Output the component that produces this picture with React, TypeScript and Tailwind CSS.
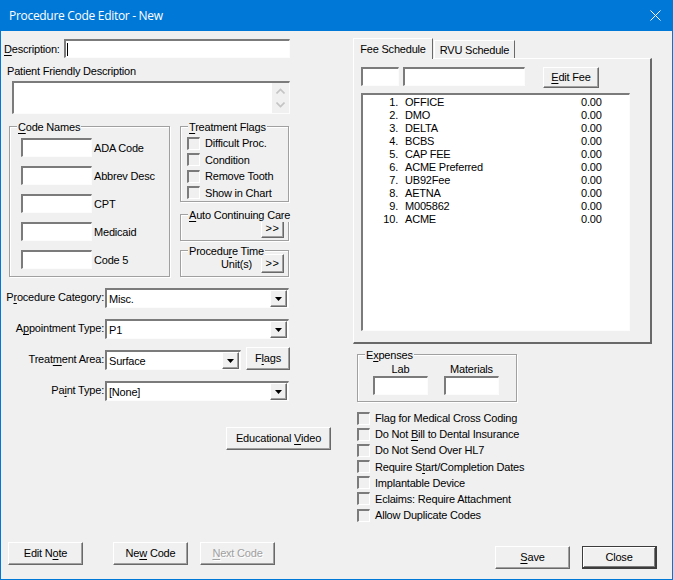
import React from "react";

const font = { fontFamily: "'Liberation Sans', Arial, sans-serif" };

function Sunken({ className = "bg-white", children }: { className?: string; children?: React.ReactNode }) {
  return (
    <div className={"box-border border-t-2 border-l-2 border-r border-b border-t-[#7b7b7b] border-l-[#7b7b7b] border-r-[#fcfcfc] border-b-[#fcfcfc] " + className}>
      {children}
    </div>
  );
}

function Btn({ className = "", children, disabled }: { className?: string; children: React.ReactNode; disabled?: boolean }) {
  return (
    <div className={"box-border flex items-center justify-center pb-[1px] border border-t-white border-l-white border-r-[#696969] border-b-[#696969] shadow-[inset_-1px_-1px_0_#a0a0a0] bg-[#f0f0f0] " + (disabled ? "text-[#a0a0a0] [text-shadow:1px_1px_0_#fff] " : "") + className}>
      <span>{children}</span>
    </div>
  );
}

function Check({ label }: { label: React.ReactNode }) {
  return (
    <div className="flex items-center h-4">
      <div className="box-border w-[13px] h-[13px] border-t-2 border-l-2 border-r border-b border-t-[#7b7b7b] border-l-[#7b7b7b] border-r-white border-b-white" />
      <span className="ml-[5px] whitespace-nowrap">{label}</span>
    </div>
  );
}

function Group({ className = "", title, titleClass = "left-[7px]", children }: { className?: string; title: React.ReactNode; titleClass?: string; children?: React.ReactNode }) {
  return (
    <div className={"relative box-border border border-[#a0a0a0] shadow-[1px_1px_0_#fff,inset_1px_1px_0_#fff] " + className}>
      <span className={"absolute -top-[7px] px-[1px] bg-[#f0f0f0] leading-[14px] whitespace-nowrap " + titleClass}>{title}</span>
      {children}
    </div>
  );
}

function Combo({ className = "", value }: { className?: string; value: string }) {
  return (
    <Sunken className={"bg-white flex items-center justify-between h-[20px] pl-[2px] pr-[1px] " + className}>
      <span>{value}</span>
      <div className="box-border flex items-center justify-center w-[17px] h-[17px] border border-t-white border-l-white border-r-[#696969] border-b-[#696969] shadow-[inset_-1px_-1px_0_#a0a0a0] bg-[#f0f0f0]">
        <svg width="7" height="4" viewBox="0 0 7 4"><path d="M0 0h7L3.5 4z" fill="#000" /></svg>
      </div>
    </Sunken>
  );
}

function CodeRow({ label }: { label: string }) {
  return (
    <div className="flex items-center h-[19px]">
      <Sunken className="bg-white w-[71px] h-[19px]" />
      <span className="ml-[2px] mt-[1px] whitespace-nowrap">{label}</span>
    </div>
  );
}

function U({ children }: { children: React.ReactNode }) {
  return <span className="underline underline-offset-2">{children}</span>;
}

const fees = ["OFFICE", "DMO", "DELTA", "BCBS", "CAP FEE", "ACME Preferred", "UB92Fee", "AETNA", "M005862", "ACME"];

function ComboRow({ label, children, className = "" }: { label: React.ReactNode; children: React.ReactNode; className?: string }) {
  return (
    <div className={"flex items-center " + className}>
      <span className="w-[100px] text-right whitespace-nowrap -mt-[2px]">{label}</span>
      <div className="ml-[1px] flex items-center">{children}</div>
    </div>
  );
}

export default function App() {
  return (
    <div style={font} className="w-[673px] h-[580px] box-border flex flex-col border-l border-r border-b border-[#0078d7] bg-[#f0f0f0] text-[11px] leading-[14px] tracking-[-0.2px] text-black overflow-hidden">
      <div className="flex items-center justify-between h-[31px] shrink-0 -mx-[1px] pl-[9px] pr-[12px] bg-[#0078d7] text-white" >
        <span style={{ fontFamily: "'Open Sans', sans-serif" }} className="text-[12px] tracking-[-0.3px]">Procedure Code Editor - New</span>
        <svg width="11" height="11" viewBox="0 0 11 11"><path d="M.5.5l10 10M10.5.5l-10 10" stroke="#fff" strokeWidth="1" fill="none" /></svg>
      </div>

      <div className="flex flex-1 min-h-0">
        {/* left column */}
        <div className="w-[352px] shrink-0 flex flex-col pl-[3px] pt-[8px]">
          <div className="flex items-center h-[19px]">
            <span className="w-[59px] whitespace-nowrap"><U>D</U>escription:</span>
            <Sunken className="bg-white ml-[1px] w-[226px] h-[19px] flex items-center pl-[1px]"><div className="w-[1px] h-[13px] bg-black" /></Sunken>
          </div>
          <div className="mt-[6px] ml-[3px] h-[14px] whitespace-nowrap">Patient Friendly Description</div>
          <div className="mt-[3px] ml-[8px] w-[278px] h-[33px]">
            <Sunken className="bg-white h-full flex justify-end">
              <div className="w-[17px] h-full bg-[#f0f0f0] flex flex-col items-center justify-between py-[5px]">
                <svg width="9" height="6" viewBox="0 0 9 6"><path d="M.5 5.5l4-4 4 4" stroke="#c4c4c4" strokeWidth="1.6" fill="none" /></svg>
                <svg width="9" height="6" viewBox="0 0 9 6"><path d="M.5.5l4 4 4-4" stroke="#c4c4c4" strokeWidth="1.6" fill="none" /></svg>
              </div>
            </Sunken>
          </div>

          <div className="flex mt-[12px] ml-[5px]">
            <Group className="w-[161px] h-[151px] pl-[11px] pt-[11px] flex flex-col gap-[9px]" title={<><U>C</U>ode Names</>}>
              <CodeRow label="ADA Code" />
              <CodeRow label="Abbrev Desc" />
              <CodeRow label="CPT" />
              <CodeRow label="Medicaid" />
              <CodeRow label="Code 5" />
            </Group>
            <div className="ml-[10px] w-[109px] flex flex-col">
              <Group className="h-[76px] pl-[6px] pt-[8px] flex flex-col gap-[0.5px]" title={<><U>T</U>reatment Flags</>}>
                <Check label="Difficult Proc." />
                <Check label="Condition" />
                <Check label="Remove Tooth" />
                <Check label="Show in Chart" />
              </Group>
              <Group className="mt-[12px] h-[27px] flex items-center justify-end pr-[4px]" title={<><U>A</U>uto Continuing Care</>} titleClass="left-[7px] px-0">
                <Btn className="w-[23px] h-[18px] mt-[2px] tracking-[0.5px]">&gt;&gt;</Btn>
              </Group>
              <Group className="mt-[9px] h-[27px] flex items-center justify-end pr-[4px]" title={<>Procedu<U>r</U>e Time</>}>
                <span className="mr-[9px]">Unit(s)</span>
                <Btn className="w-[23px] h-[19px] tracking-[0.5px]">&gt;&gt;</Btn>
              </Group>
            </div>
          </div>

          <ComboRow className="mt-[11px] h-[20px]" label={<>P<U>r</U>ocedure Category:</>}><Combo className="w-[184px]" value="Misc." /></ComboRow>
          <ComboRow className="mt-[11px] h-[20px]" label={<>A<U>p</U>pointment Type:</>}><Combo className="w-[184px]" value="P1" /></ComboRow>
          <ComboRow className="mt-[11px] h-[20px]" label={<>Treat<U>m</U>ent Area:</>}>
            <Combo className="w-[136px]" value="Surface" />
            <Btn className="ml-[5px] w-[44px] h-[23px] -mt-[3px]">F<U>l</U>ags</Btn>
          </ComboRow>
          <ComboRow className="mt-[11px] h-[20px]" label={<>Pa<U>i</U>nt Type:</>}><Combo className="w-[184px]" value="[None]" /></ComboRow>

          <div className="mt-[26px] flex justify-end pr-[22px]">
            <Btn className="w-[105px] h-[23px]">Educational <U>V</U>ideo</Btn>
          </div>

          <div className="mt-[92px] ml-[4px] flex">
            <Btn className="w-[75px] h-[23px]">Edit N<U>o</U>te</Btn>
            <Btn className="ml-[30px] w-[75px] h-[23px]">Ne<U>w</U> Code</Btn>
            <Btn disabled className="ml-[12px] w-[75px] h-[23px]"><U>N</U>ext Code</Btn>
          </div>
        </div>

        {/* right column */}
        <div className="flex-1 flex flex-col pt-[7px]">
          <div className="flex items-end h-[20px] relative z-10">
            <div className="box-border w-[80px] h-[21px] -mb-[1px] flex items-center justify-center border-t border-l border-white border-r border-r-[#696969] bg-[#f0f0f0] pb-[1px]">Fee Schedule</div>
            <div className="box-border ml-[1px] w-[81px] h-[18px] flex items-center justify-center border-t border-l border-white border-r border-r-[#696969]">RVU Schedule</div>
          </div>
          <div className="box-border w-[299px] h-[286px] border-t border-l border-white border-r-2 border-b-2 border-r-[#696969] border-b-[#696969] pl-[7px] pt-[8px] flex flex-col">
            <div className="flex items-start">
              <Sunken className="bg-white w-[38px] h-[19px]" />
              <Sunken className="bg-white ml-[4px] w-[122px] h-[19px]" />
              <Btn className="ml-[18px] w-[56px] h-[21px]"><U>E</U>dit Fee</Btn>
            </div>
            <Sunken className="bg-white mt-[5px] w-[269px] h-[238px] pt-[1px]">
              {fees.map((f, i) => (
                <div key={f} className="flex h-[13px] leading-[13px] whitespace-nowrap">
                  <span className="w-[35px] text-right">{i + 1}.</span>
                  <span className="ml-[7px] w-[176px]">{f}</span>
                  <span>0.00</span>
                </div>
              ))}
            </Sunken>
          </div>

          <Group className="mt-[10px] ml-[4px] w-[160px] h-[48px] flex pl-[15px] gap-[16px] pt-[7px]" title={<>E<U>x</U>penses</>}>
            <div className="flex flex-col items-center w-[55px]">
              <span className="h-[14px]">Lab</span>
              <Sunken className="bg-white w-[55px] h-[19px]" />
            </div>
            <div className="flex flex-col items-center w-[55px]">
              <span className="h-[14px]">Materials</span>
              <Sunken className="bg-white w-[55px] h-[19px]" />
            </div>
          </Group>

          <div className="mt-[8px] ml-[4px] flex flex-col gap-[0.2px]">
            <Check label="Flag for Medical Cross Coding" />
            <Check label={<>Do Not <U>B</U>ill to Dental Insurance</>} />
            <Check label="Do Not Send Over HL7" />
            <Check label={<>Require S<U>t</U>art/Completion Dates</>} />
            <Check label="Implantable Device" />
            <Check label="Eclaims: Require Attachment" />
            <Check label="Allow Duplicate Codes" />
          </div>

          <div className="mt-[23px] ml-[142px] flex">
            <Btn className="w-[75px] h-[23px]"><U>S</U>ave</Btn>
            <Btn className="ml-[12px] w-[75px] h-[23px] !border-[#3c3c3c] !border-b-2 !border-r-2 shadow-[inset_1px_1px_0_#fff,inset_-1px_-1px_0_#7b7b7b]">Close</Btn>
          </div>
        </div>
      </div>
    </div>
  );
}
